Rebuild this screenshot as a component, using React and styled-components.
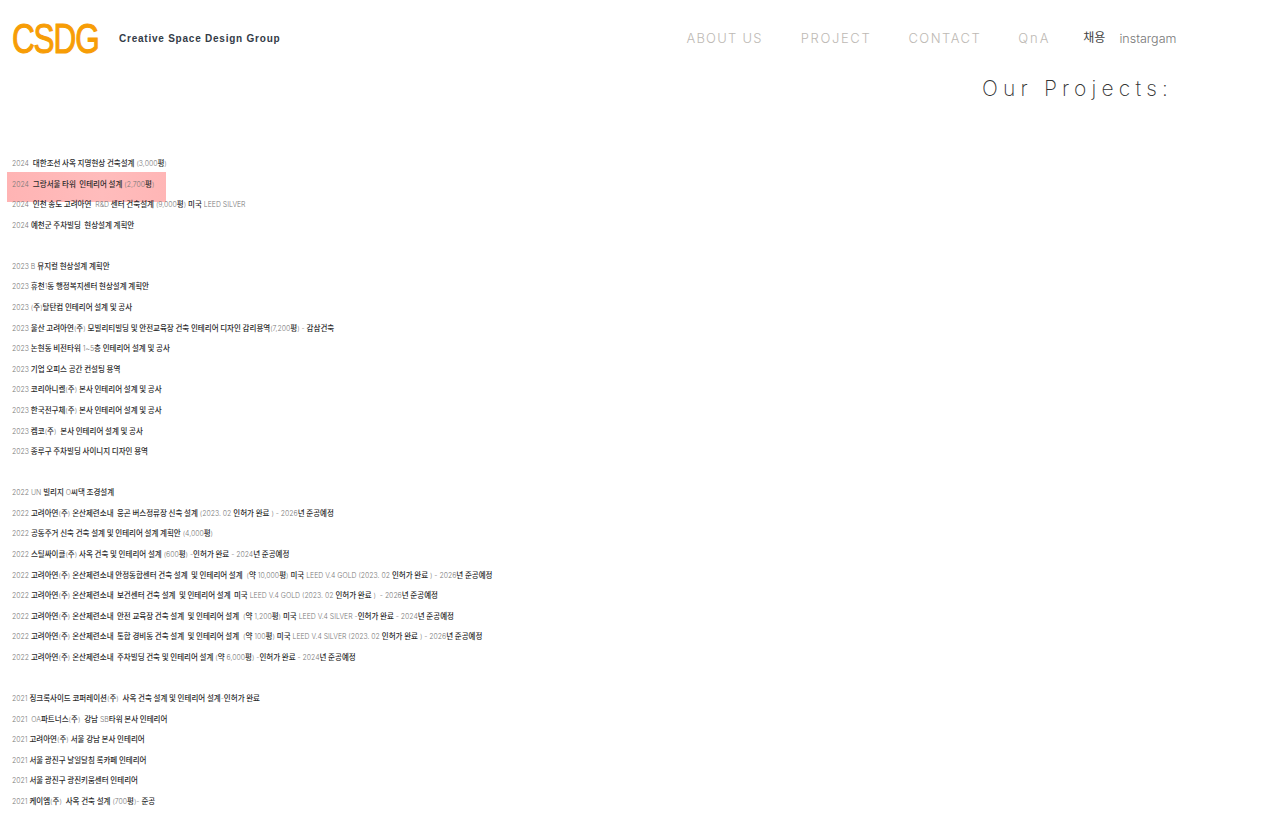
import React from 'react';
import styled, { createGlobalStyle } from 'styled-components';

const GlobalStyle = createGlobalStyle`
  html, body {
    margin: 0;
    padding: 0;
    background: #fff;
    overflow: hidden;
  }
  body {
    font-family: 'Inter', 'Noto Sans CJK KR', sans-serif;
  }
`;

const Header = styled.header`
  display: flex;
  align-items: center;
  height: 80px;
  padding: 0 0 3px 12px;
  box-sizing: border-box;
`;

const LogoBox = styled.div`
  width: 86px;
  height: 32px;
  margin-right: 21px;
`;

const Logo = styled.div`
  display: inline-block;
  font-family: 'Liberation Sans', sans-serif;
  font-size: 42px;
  line-height: 32px;
  color: #f79d06;
  letter-spacing: -1.5px;
  -webkit-text-stroke: 1.1px #f79d06;
  transform: scaleX(0.75);
  transform-origin: left center;
`;

const Tagline = styled.div`
  font-family: 'Liberation Sans', sans-serif;
  font-size: 10px;
  font-weight: 700;
  letter-spacing: 0.77px;
  color: #333b47;
`;

const Nav = styled.nav`
  display: flex;
  align-items: center;
  margin-left: 406px;
  margin-top: -1px;
`;

const NavLink = styled.a`
  font-family: 'Inter', sans-serif;
  font-size: 13px;
  font-weight: 300;
  letter-spacing: ${({ spacing }) => spacing}px;
  color: #bdb9b4;
  margin-right: ${({ gap }) => gap}px;
  white-space: nowrap;
`;

const Recruit = styled.a`
  font-family: 'Noto Sans CJK KR', sans-serif;
  font-size: 12px;
  color: #444;
  margin-right: 14px;
  margin-top: -3px;
`;

const Insta = styled.a`
  font-family: 'Inter', sans-serif;
  font-size: 12.5px;
  font-weight: 300;
  color: #777;
`;

const TitleRow = styled.div`
  display: flex;
  justify-content: flex-end;
  padding-right: 107px;
  height: 23px;
  overflow: hidden;
`;

const Title = styled.h2`
  margin: -4px 0 0;
  font-family: 'Inter', sans-serif;
  font-size: 21px;
  line-height: 26px;
  font-weight: 200;
  letter-spacing: 5.2px;
  color: #333;
`;

const List = styled.div`
  padding: 50px 0 0 12px;
`;

const Row = styled.div`
  position: relative;
  height: 20.58px;
  line-height: 20.58px;
  font-size: 6.9px;
  white-space: pre;
`;

const RowText = styled.span`
  position: relative;
`;

const Latin = styled.span`
  font-weight: 300;
  color: #777;
`;

const Hangul = styled.span`
  font-family: 'Noto Sans CJK KR', sans-serif;
  font-size: 7.5px;
  font-weight: 500;
  color: #2b2b2b;
`;

const Highlight = styled.div`
  position: absolute;
  left: -5px;
  top: -1.5px;
  width: 159px;
  height: 30px;
  background: linear-gradient(90deg, #ffb4b4, #ffbcbc 60%, #ffb6b6);
`;

const rows = [
  '2024  대한조선 사옥 지명현상 건축설계 (3,000평)',
  '2024  그랑서울 타워  인테리어 설계 (2,700평)',
  '2024  인천 송도 고려아연  R&D 센터 건축설계 (9,000평) 미국 LEED SILVER',
  '2024 예천군 주차빌딩  현상설계 계획안',
  '',
  '2023 B 뮤지컬 현상설계 계획안',
  '2023 휴천1동 행정복지센터 현상설계 계획안',
  '2023 (주)탈탄컴 인테리어 설계 및 공사',
  '2023 울산 고려아연(주) 모빌리티빌딩 및 안전교육장 건축 인테리어 디자인 감리용역(7,200평) - 감삼건축',
  '2023 논현동 비전타워 1~5층 인테리어 설계 및 공사',
  '2023 기업 오피스 공간 컨설팅 용역',
  '2023 코리아니켈(주) 본사 인테리어 설계 및 공사',
  '2023 한국전구체(주) 본사 인테리어 설계 및 공사',
  '2023 켐코(주)  본사 인테리어 설계 및 공사',
  '2023 종루구 주차빌딩 사이니지 디자인 용역',
  '',
  '2022 UN 빌리지 O씨댁 조경설계',
  '2022 고려아연(주) 온산제련소내  웅곤 버스정류장 신축 설계 (2023. 02 인허가 완료 ) - 2026년 준공예정',
  '2022 공동주거 신축 건축 설계 및 인테리어 설계 계획안 (4,000평)',
  '2022 스틸싸이클(주) 사옥 건축 및 인테리어 설계 (600평) -인허가 완료 - 2024년 준공예정',
  '2022 고려아연(주) 온산제련소내 안정동합센터 건축 설계  및 인테리어 설계  (약 10,000평) 미국 LEED V.4 GOLD (2023. 02 인허가 완료 ) - 2026년 준공예정',
  '2022 고려아연(주) 온산제련소내  보건센터 건축 설계  및 인테리어 설계  미국 LEED V.4 GOLD (2023. 02 인허가 완료 )  - 2026년 준공예정',
  '2022 고려아연(주) 온산제련소내  안전 교육장 건축 설계  및 인테리어 설계  (약 1,200평) 미국 LEED V.4 SILVER -인허가 완료 - 2024년 준공예정',
  '2022 고려아연(주) 온산제련소내  통합 경비동 건축 설계  및 인테리어 설계  (약 100평) 미국 LEED V.4 SILVER (2023. 02 인허가 완료 ) - 2026년 준공예정',
  '2022 고려아연(주) 온산제련소내  주차빌딩 건축 및 인테리어 설계 (약 6,000평) -인허가 완료 - 2024년 준공예정',
  '',
  '2021 징크록사이드 코퍼레이션(주)  사옥 건축 설계 및 인테리어 설계-인허가 완료',
  '2021  OA파트너스(주)  강남 SB타워 본사 인테리어',
  '2021 고려아연(주) 서울 강남 본사 인테리어',
  '2021 서울 광진구 날일달침 록카페 인테리어',
  '2021 서울 광진구 광진키움센터 인테리어',
  '2021 케이엠(주)  사옥 건축 설계 (700평)- 준공',
];

// hangul runs are darker than the thin latin runs
const Runs = ({ text }) =>
  text.split(/([\uac00-\ud7a3]+(?:\s+[\uac00-\ud7a3]+)*)/).map((part, i) =>
    i % 2 ? <Hangul key={i}>{part}</Hangul> : <Latin key={i}>{part}</Latin>
  );

const App = () => {
  return (
    <>
      <GlobalStyle />
      <Header>
        <LogoBox>
          <Logo>CSDG</Logo>
        </LogoBox>
        <Tagline>Creative Space Design Group</Tagline>
        <Nav>
          <NavLink gap={38} spacing={1.25}>ABOUT US</NavLink>
          <NavLink gap={37} spacing={1.65}>PROJECT</NavLink>
          <NavLink gap={37} spacing={1.5}>CONTACT</NavLink>
          <NavLink gap={33} spacing={1.9}>QnA</NavLink>
          <Recruit>채용</Recruit>
          <Insta>instargam</Insta>
        </Nav>
      </Header>
      <TitleRow>
        <Title>Our Projects:</Title>
      </TitleRow>
      <List>
        {rows.map((text, i) => (
          <Row key={i}>
            {i === 1 && <Highlight />}
            <RowText>
              <Runs text={text} />
            </RowText>
          </Row>
        ))}
      </List>
    </>
  );
};

export default App;
